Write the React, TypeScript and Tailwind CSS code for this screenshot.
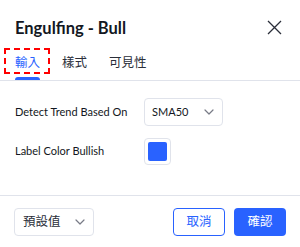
import React from 'react';

function Chevron() {
  return (
    <svg width="10" height="6" viewBox="0 0 10 6" fill="none">
      <path d="M1 1l4 4 4-4" stroke="#787b86" strokeWidth="1.2" strokeLinecap="round" strokeLinejoin="round" />
    </svg>
  );
}

export default function App() {
  const font = { fontFamily: 'Lato, "Noto Sans CJK TC", sans-serif' };
  return (
    <div className="w-[300px] h-[247px] bg-white flex flex-col text-[#131722] overflow-hidden" style={font}>
      {/* Header */}
      <div className="flex items-center justify-between pl-[15px] pr-[18px] pt-[13px] h-[42px]">
        <div className="text-[16.5px] font-bold leading-[24px] whitespace-nowrap">Engulfing - Bull</div>
        <svg width="15" height="15" viewBox="0 0 15 15" fill="none">
          <path d="M1 1l13 13M14 1L1 14" stroke="#2a2e39" strokeWidth="1.3" />
        </svg>
      </div>

      {/* Tabs */}
      <div className="flex items-end border-b border-[#e0e3eb] h-[39px] pl-[15px] gap-[22px] text-[12.5px]">
        <div className="relative flex flex-col">
          <span className="text-[#2962ff] leading-[18px] pb-[5px]">輸入</span>
          <div className="h-[3px] bg-[#2962ff] rounded-t-sm" />
          <div className="absolute left-[-11px] top-[-6px] w-[46px] h-[26px] border-2 border-dashed border-[#ff0000]" />
        </div>
        <span className="leading-[18px] pb-[8px] text-[#2a2e39]">樣式</span>
        <span className="leading-[18px] pb-[8px] text-[#2a2e39]">可見性</span>
      </div>

      {/* Body */}
      <div className="flex-1 flex flex-col pl-[15px] pt-[17px] gap-[12px] text-[11px]">
        <div className="flex items-center h-[28px]">
          <div className="w-[129px] whitespace-nowrap">Detect Trend Based On</div>
          <div className="w-[79px] h-[28px] border border-[#e0e3eb] rounded-[4px] flex items-center justify-between pl-[7px] pr-[8px]">
            <span>SMA50</span>
            <Chevron />
          </div>
        </div>
        <div className="flex items-center h-[27px]">
          <div className="w-[129px] whitespace-nowrap">Label Color Bullish</div>
          <div className="w-[27px] h-[27px] border border-[#e0e3eb] rounded-[4px] flex items-center justify-center">
            <div className="w-[19px] h-[19px] bg-[#2962ff] rounded-[2px]" />
          </div>
        </div>
      </div>

      {/* Footer */}
      <div className="border-t border-[#e0e3eb] h-[52px] flex items-start justify-between pl-[14px] pr-[14px] pt-[12px] text-[12.5px]">
        <div className="w-[80px] h-[28px] border border-[#e0e3eb] rounded-[4px] flex items-center justify-between pl-[8px] pr-[8px]">
          <span className="text-[#2a2e39]">預設值</span>
          <Chevron />
        </div>
        <div className="flex gap-[9px]">
          <button className="w-[52px] h-[28px] border border-[#2962ff] text-[#2962ff] rounded-[4px] flex items-center justify-center">取消</button>
          <button className="w-[52px] h-[28px] bg-[#2962ff] text-white rounded-[4px] flex items-center justify-center">確認</button>
        </div>
      </div>
    </div>
  );
}
